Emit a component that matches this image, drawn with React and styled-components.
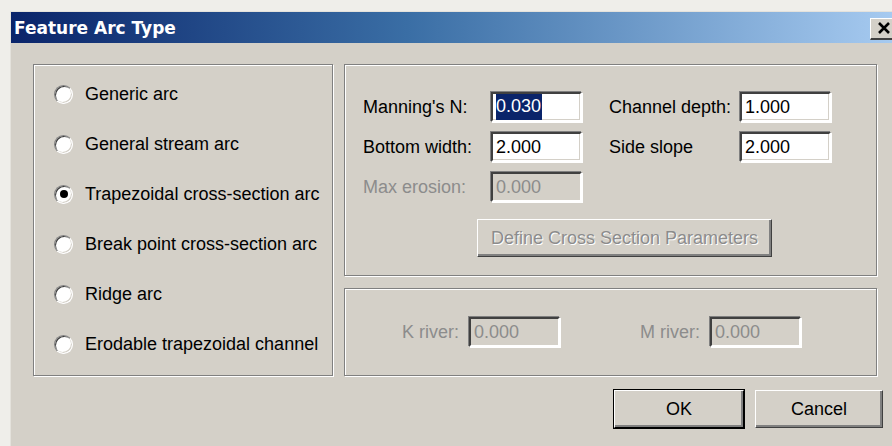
import React, { useState } from 'react';
import styled, { createGlobalStyle, css } from 'styled-components';

const GlobalStyle = createGlobalStyle`
  html, body {
    margin: 0;
    padding: 0;
    background: #efeeea;
  }
  * {
    box-sizing: border-box;
  }
`;

const ARC_TYPES = [
  'Generic arc',
  'General stream arc',
  'Trapezoidal cross-section arc',
  'Break point cross-section arc',
  'Ridge arc',
  'Erodable trapezoidal channel',
];

const uiFont = `"Liberation Sans", Arial, sans-serif`;

const App = () => {
  const [arcType, setArcType] = useState(2);

  return (
    <>
      <GlobalStyle />
      <Screen>
        <Window>
          <TitleBar>
            <Title>Feature Arc Type</Title>
            <CloseButton aria-label="Close">
              <svg width="14" height="12" viewBox="0 0 14 12">
                <path d="M2 1 L12 11 M12 1 L2 11" stroke="#000" strokeWidth="2.6" />
              </svg>
            </CloseButton>
          </TitleBar>

          <Body>
            <MainRow>
              <GroupBox $width={300} $height={312}>
                <RadioList>
                  {ARC_TYPES.map((label, i) => (
                    <RadioRow key={label} onClick={() => setArcType(i)}>
                      <RadioCircle $checked={arcType === i} />
                      <Label>{label}</Label>
                    </RadioRow>
                  ))}
                </RadioList>
              </GroupBox>

              <RightColumn>
                <GroupBox $width={533} $height={212}>
                  <ParamGrid>
                    <Label>Manning's N:</Label>
                    <Field>
                      <Selected>0.030</Selected>
                    </Field>
                    <Label $gapped>Channel depth:</Label>
                    <Field>1.000</Field>

                    <Label>Bottom width:</Label>
                    <Field>2.000</Field>
                    <Label $gapped>Side slope</Label>
                    <Field>2.000</Field>

                    <Label $disabled>Max erosion:</Label>
                    <Field $disabled>0.000</Field>
                  </ParamGrid>
                  <DefineRow>
                    <Button $width={295} $disabled>Define Cross Section Parameters</Button>
                  </DefineRow>
                </GroupBox>

                <GroupBox $width={533} $height={88}>
                  <RiverRow>
                    <RiverPair>
                      <Label $disabled>K river:</Label>
                      <Field $disabled>0.000</Field>
                    </RiverPair>
                    <RiverPair>
                      <Label $disabled>M river:</Label>
                      <Field $disabled>0.000</Field>
                    </RiverPair>
                  </RiverRow>
                </GroupBox>
              </RightColumn>
            </MainRow>

            <ButtonRow>
              <Button $width={130} $default>OK</Button>
              <Button $width={128}>Cancel</Button>
            </ButtonRow>
          </Body>
        </Window>
      </Screen>
    </>
  );
};

// Styles
const Screen = styled.div`
  width: 892px;
  height: 446px;
  overflow: hidden;
  background: #efeeea;
  padding: 11px 0 0 10px;
`;

const Window = styled.div`
  width: 882px;
  height: 440px;
  background: #d4d0c8;
  border-top: 1px solid #e4e2dc;
  border-left: 1px solid #e4e2dc;
`;

const TitleBar = styled.div`
  height: 31px;
  display: flex;
  align-items: center;
  justify-content: space-between;
  padding: 0 0 0 3px;
  background: linear-gradient(to right, #0a246a 0%, #3a6ea5 45%, #a6caf0 100%);
`;

const Title = styled.div`
  font-family: "DejaVu Sans", Verdana, sans-serif;
  font-weight: bold;
  font-size: 17px;
  color: #ffffff;
`;

const CloseButton = styled.div`
  width: 22px;
  height: 22px;
  margin-top: 2px;
  display: flex;
  align-items: center;
  justify-content: flex-end;
  padding-right: 1px;
  background: #d4d0c8;
  border-top: 1px solid #ffffff;
  border-left: 1px solid #ffffff;
  border-bottom: 2px solid #404040;
`;

const Body = styled.div`
  padding: 21px 0 0 22px;
`;

const MainRow = styled.div`
  display: flex;
  gap: 11px;
`;

const RightColumn = styled.div`
  display: flex;
  flex-direction: column;
  gap: 12px;
`;

const GroupBox = styled.div`
  width: ${props => props.$width}px;
  height: ${props => props.$height}px;
  border: 1px solid #808080;
  box-shadow: inset 1px 1px 0 #ffffff, 1px 1px 0 #ffffff;
`;

const RadioList = styled.div`
  display: flex;
  flex-direction: column;
  padding: 4px 0 0 20px;
`;

const RadioRow = styled.div`
  height: 50px;
  display: flex;
  align-items: center;
  gap: 12px;
  cursor: default;
`;

const RadioCircle = styled.span`
  position: relative;
  width: 19px;
  height: 19px;
  flex: none;
  border-radius: 50%;
  background: #ffffff;
  border: 1px solid;
  border-color: #808080 #ffffff #ffffff #808080;
  box-shadow: inset 1px 1px 0 #404040, inset -1px -1px 0 #d4d0c8;

  ${props => props.$checked && css`
    &::after {
      content: '';
      position: absolute;
      left: 4.5px;
      top: 4.5px;
      width: 8px;
      height: 8px;
      border-radius: 50%;
      background: #000000;
    }
  `}
`;

const Label = styled.span`
  font-family: ${uiFont};
  font-size: 18px;
  color: ${props => props.$disabled ? '#8c8c8c' : '#000000'};
  white-space: nowrap;
  margin-left: ${props => props.$gapped ? '27px' : '0'};
`;

const ParamGrid = styled.div`
  display: grid;
  grid-template-columns: 128px 91px 158px 91px;
  row-gap: 10px;
  align-items: center;
  padding: 27px 0 0 18px;
`;

const Field = styled.div`
  width: 91px;
  height: 30px;
  display: flex;
  align-items: center;
  padding-left: 3px;
  font-family: ${uiFont};
  font-size: 18px;
  color: ${props => props.$disabled ? '#8c8c8c' : '#000000'};
  background: ${props => props.$disabled ? '#d4d0c8' : '#ffffff'};
  border: 2px solid;
  border-color: #404040 #ffffff #ffffff #404040;
  box-shadow: inset -1px -1px 0 #d4d0c8, 1px 1px 0 #ffffff, -1px -1px 0 #808080;
`;

const Selected = styled.span`
  background: #0a246a;
  color: #ffffff;
  padding: 2px 1px 3px 0;
`;

const DefineRow = styled.div`
  padding: 17px 0 0 132px;
`;

const Button = styled.div`
  width: ${props => props.$width}px;
  height: 38px;
  display: flex;
  align-items: center;
  justify-content: center;
  font-family: ${uiFont};
  font-size: 18px;
  white-space: nowrap;
  color: #000000;
  background: #d4d0c8;
  border: 1px solid;
  border-color: #ffffff #404040 #404040 #ffffff;
  box-shadow: inset -2px -2px 0 #808080;

  ${props => props.$default && css`
    outline: 1px solid #000000;
    border-color: #ffffff #000000 #000000 #ffffff;
  `}

  ${props => props.$disabled && css`
    color: #8c8c8c;
    text-shadow: 1px 1px 0 #ffffff;
  `}
`;

const RiverRow = styled.div`
  display: flex;
  align-items: center;
  gap: 80px;
  padding: 28px 0 0 57px;
`;

const RiverPair = styled.div`
  display: flex;
  align-items: center;
  gap: 10px;
`;

const ButtonRow = styled.div`
  display: flex;
  gap: 11px;
  padding: 14px 0 0 581px;
`;

export default App;
